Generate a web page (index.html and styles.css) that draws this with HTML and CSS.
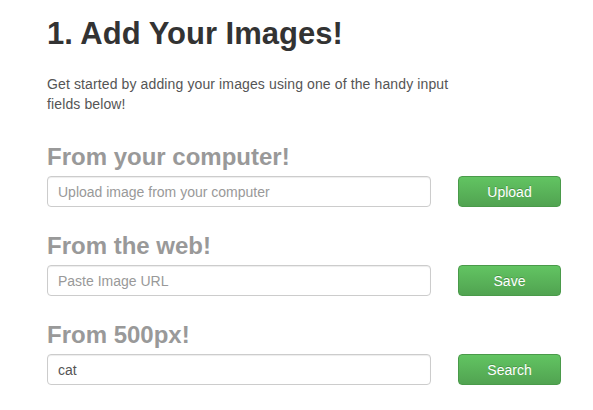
FILE: index.html
```html
<!DOCTYPE html>
<html lang="en">
<head>
  <meta charset="UTF-8" />
  <title>Add Your Images</title>
  <link rel="stylesheet" href="styles.css">
</head>
<body>
  <div class="page">
    <h1>1. Add Your Images!</h1>
    <p class="intro">Get started by adding your images using one of the handy input fields below!</p>

    <div class="source">
      <h3>From your computer!</h3>
      <div class="row">
        <input type="text" placeholder="Upload image from your computer">
        <button type="button">Upload</button>
      </div>
    </div>

    <div class="source">
      <h3>From the web!</h3>
      <div class="row">
        <input type="text" placeholder="Paste Image URL">
        <button type="button">Save</button>
      </div>
    </div>

    <div class="source">
      <h3>From 500px!</h3>
      <div class="row">
        <input type="text" value="cat">
        <button type="button">Search</button>
      </div>
    </div>
  </div>
</body>
</html>
```

FILE: styles.css
```css
* {
  box-sizing: border-box;
  margin: 0;
  padding: 0;
  font-family: 'Liberation Sans', Arial, sans-serif;
}

body {
  background: #fff;
  color: #333;
}

.page {
  padding: 14px 0 0 47px;
}

h1 {
  font-size: 31px;
  line-height: 40px;
  font-weight: bold;
  color: #333;
}

.intro {
  margin: 20px 0 28px;
  max-width: 420px;
  font-size: 14px;
  line-height: 20px;
  letter-spacing: 0.12px;
  color: #555;
}

.source {
  margin-top: 24px;
}

.source h3 {
  font-size: 24px;
  line-height: 30px;
  color: #999;
  margin-bottom: 4px;
}

.row {
  display: flex;
  align-items: center;
  gap: 27px;
}

input {
  flex: 0 0 384px;
  height: 31px;
  padding: 4px 10px;
  font-size: 14px;
  color: #555;
  border: 1px solid #ccc;
  border-radius: 4px;
  box-shadow: inset 0 1px 1px rgba(0,0,0,0.075);
}

input::placeholder {
  color: #999;
}

button {
  flex: 0 0 103px;
  height: 31px;
  font-size: 14px;
  color: #fff;
  background: linear-gradient(#62c462, #51a351);
  border: 1px solid #4a9a4a;
  border-radius: 4px;
  text-shadow: 0 -1px 0 rgba(0,0,0,0.2);
  cursor: pointer;
}
```
